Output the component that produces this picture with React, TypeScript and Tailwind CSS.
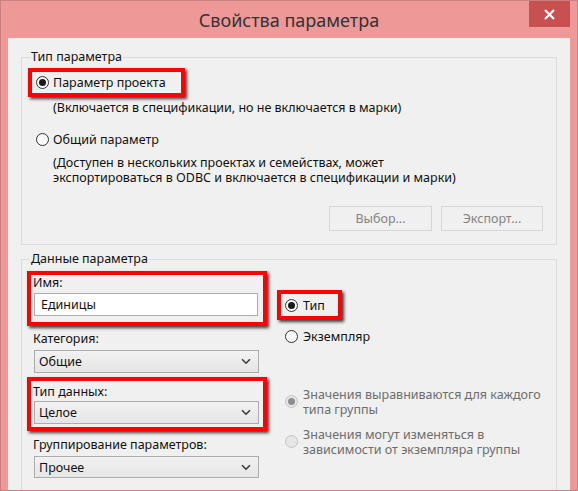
import React from "react";

const font = { fontFamily: '"Noto Sans", "Open Sans", sans-serif' };

function Radio({ checked, disabled }: { checked?: boolean; disabled?: boolean }) {
  return (
    <span
      className={
        "flex h-[13px] w-[13px] shrink-0 items-center justify-center rounded-full border " +
        (disabled
          ? "border-[#c4c4c4] bg-[#e6e6e6]"
          : "border-[#333333] bg-gradient-to-b from-[#f4f4f4] to-white")
      }
    >
      {checked && (
        <span
          className={
            "h-[7px] w-[7px] rounded-full " + (disabled ? "bg-[#8d8d8d]" : "bg-[#1a1a1a]")
          }
        />
      )}
    </span>
  );
}

function Chevron() {
  return (
    <svg width="10" height="7" viewBox="0 0 10 7" className="shrink-0">
      <path d="M1 1.2 L5 5.2 L9 1.2" fill="none" stroke="#3c3c3c" strokeWidth="1.6" />
    </svg>
  );
}

function Select({ value, h = 23 }: { value: string; h?: number }) {
  return (
    <div
      className={
        "flex w-[225px] items-center justify-between border border-[#acacac] bg-gradient-to-b from-[#f2f2f2] to-[#e5e5e5] pl-[4px] pr-[7px] text-[#111] " +
        (h === 23 ? "h-[23px]" : "h-[22px]")
      }
    >
      <span>{value}</span>
      <Chevron />
    </div>
  );
}

const redBox = "border-4 border-[#ff0000] shadow-[2px_2px_3px_rgba(0,0,0,0.75)]";

export default function App() {
  return (
    <div
      className="relative flex h-[491px] w-[578px] flex-col overflow-hidden border border-[#c98080] bg-[#ee9898] text-[12.5px] leading-[15px] text-[#111]"
      style={font}
    >
      {/* title bar */}
      <div className="relative flex h-[37px] shrink-0 items-center justify-center">
        <span className="text-[18px] leading-[24px] text-[#333]">Свойства параметра</span>
        <div className="absolute right-[7px] top-0 flex h-[26px] w-[41px] items-center justify-center bg-[#c75050]">
          <svg width="11" height="11" viewBox="0 0 11 11">
            <path d="M1 1 L10 10 M10 1 L1 10" stroke="white" strokeWidth="2.2" />
          </svg>
        </div>
      </div>

      {/* client area */}
      <div className="mx-[7px] flex-1 bg-[#f0f0f0] pt-[11px]">
        {/* group 1 */}
        <fieldset className="ml-[13px] w-[536px] border border-[#dcdcdc] p-0 pb-[13px]">
          <legend className="ml-[8px] px-[1px] leading-[16px]">Тип параметра</legend>
          <div className={"ml-[6px] mt-[3px] flex h-[29px] w-[157px] items-center pl-[4px] " + redBox}>
            <Radio checked />
            <span className="ml-[4px]">Параметр проекта</span>
          </div>
          <div className="ml-[31px] mt-[3px]">
            (Включается в спецификации, но не включается в марки)
          </div>
          <div className="ml-[14px] mt-[14px] flex h-[21px] items-center">
            <Radio />
            <span className="ml-[4px]">Общий параметр</span>
          </div>
          <div className="ml-[31px] mt-[5px]">
            <div>(Доступен в нескольких проектах и семействах, может</div>
            <div>экспортироваться в ODBC и включается в спецификации и марки)</div>
          </div>
          <div className="mt-[21px] flex justify-end gap-[9px] pr-[13px]">
            <div className="flex h-[25px] w-[103px] items-center justify-center border border-[#d5d5d5] bg-[#f0f0f0] text-[#838383]">
              Выбор...
            </div>
            <div className="flex h-[25px] w-[102px] items-center justify-center border border-[#d5d5d5] bg-[#f0f0f0] text-[#838383]">
              Экспорт...
            </div>
          </div>
        </fieldset>

        {/* group 2 */}
        <fieldset className="ml-[13px] mt-[6px] w-[536px] border border-[#dcdcdc] p-0 pb-[20px]">
          <legend className="ml-[8px] px-[1px] leading-[16px]">Данные параметра</legend>
          <div className="flex">
            {/* left column */}
            <div className="ml-[5px] flex w-[240px] flex-col">
              <div className={"mt-[4px] flex h-[55px] flex-col " + redBox}>
                <span className="pl-[2px]">Имя:</span>
                <div className="ml-[3px] mt-[3px] flex h-[23px] w-[224px] items-center border border-[#abadb3] bg-white pl-[6px]">
                  Единицы
                </div>
              </div>
              <span className="ml-[6px] mt-[4.5px]">Категория:</span>
              <div className="ml-[7px] mt-[4.5px]">
                <Select value="Общие" />
              </div>
              <div className={"mt-[4px] flex h-[54px] flex-col pt-[2.5px] " + redBox}>
                <span className="pl-[2px]">Тип данных:</span>
                <div className="ml-[3px] mt-[2.5px]">
                  <Select value="Целое" />
                </div>
              </div>
              <span className="ml-[6px] mt-[5.5px]">Группирование параметров:</span>
              <div className="ml-[7px] mt-[4.5px]">
                <Select value="Прочее" h={22} />
              </div>
            </div>

            {/* right column */}
            <div className="ml-[10px] flex flex-col">
              <div className={"mt-[23px] flex h-[30px] w-[65px] items-center pl-[4px] " + redBox}>
                <Radio checked />
                <span className="ml-[5px]">Тип</span>
              </div>
              <div className="ml-[8px] mt-[5.5px] flex h-[21px] items-center">
                <Radio />
                <span className="ml-[5px]">Экземпляр</span>
              </div>
              <div className="ml-[8px] mt-[40px] flex items-center text-[#6d6d6d]">
                <Radio checked disabled />
                <div className="ml-[5px]">
                  <div>Значения выравниваются для каждого</div>
                  <div>типа группы</div>
                </div>
              </div>
              <div className="ml-[8px] mt-[10px] flex items-center text-[#6d6d6d]">
                <Radio disabled />
                <div className="ml-[5px]">
                  <div>Значения могут изменяться в</div>
                  <div>зависимости от экземпляра группы</div>
                </div>
              </div>
            </div>
          </div>
        </fieldset>
      </div>
    </div>
  );
}
